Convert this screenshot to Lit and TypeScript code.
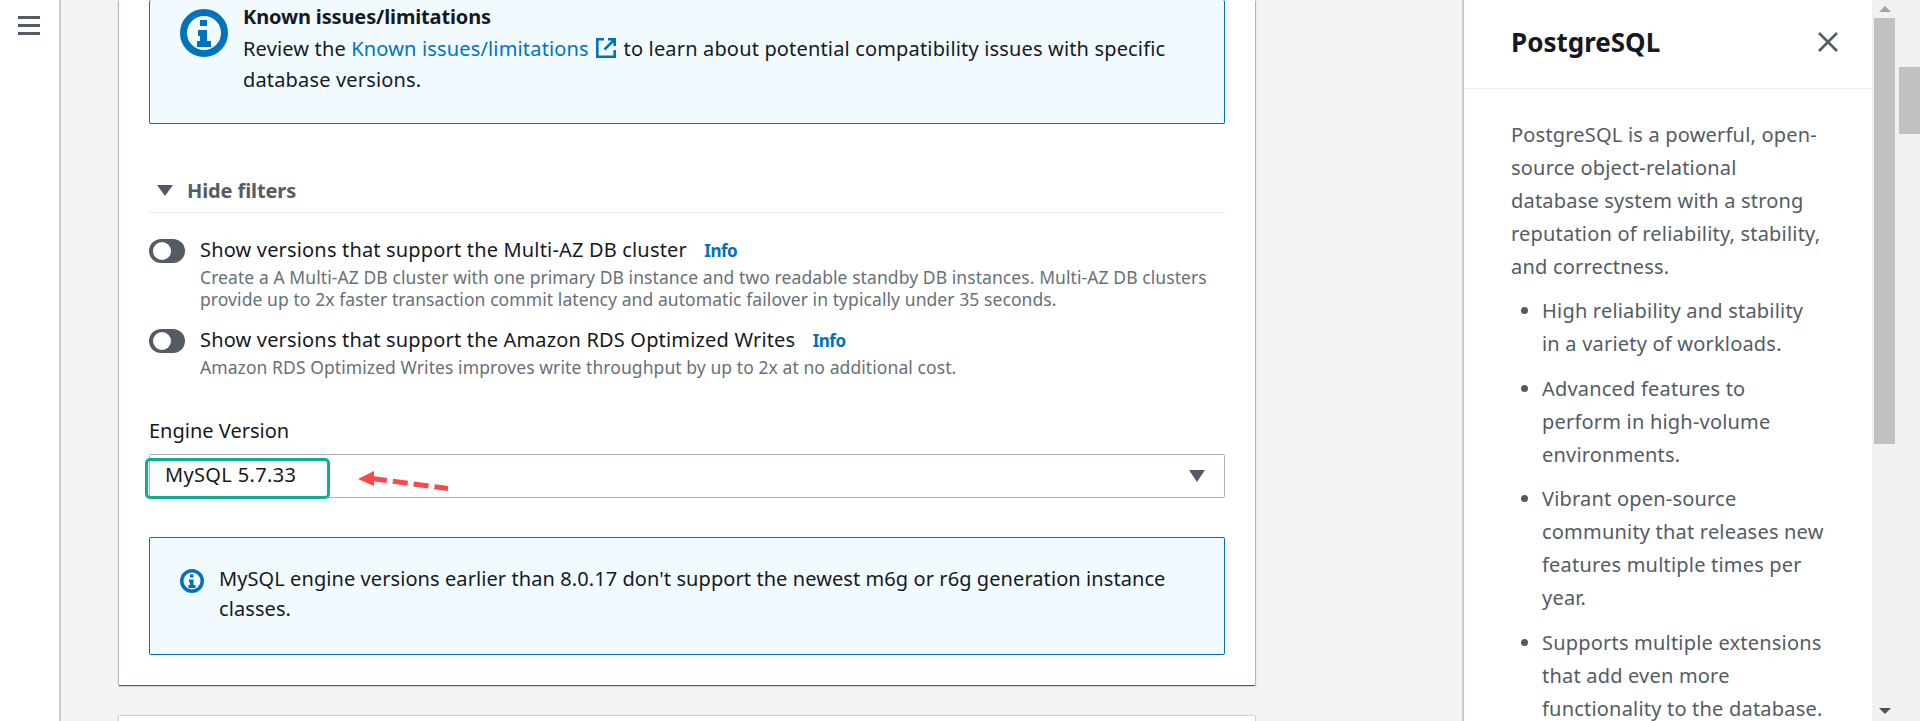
import { LitElement, html, css } from "lit";
import { customElement } from "lit/decorators.js";

const infoIcon = (size: number) => html`<svg class="info" width=${size} height=${size} viewBox="0 0 48 48">
  <circle cx="24" cy="24" r="20.5" fill="none" stroke="#0073bb" stroke-width="7"/>
  <rect x="20" y="11" width="7" height="6" fill="#0073bb"/>
  <path d="M18 21h9v11h4v6H17v-6h3v-5h-2z" fill="#0073bb"/>
</svg>`;

const extIcon = html`<svg class="ext" width="22" height="22" viewBox="0 0 22 22" fill="none" stroke="#0073bb" stroke-width="2.6">
  <path d="M9 2.3H2.3v17.4h17.4V13"/>
  <path d="M13 2.3h6.7V9M19.4 2.6 9.5 12.5"/>
</svg>`;

const tri = (w: number, h: number, color: string) => html`<svg width=${w} height=${h} viewBox="0 0 16 11" preserveAspectRatio="none" class="tri"><path d="M0 0h16L8 11z" fill=${color}/></svg>`;

@customElement("app-root")
export class AppRoot extends LitElement {
  static styles = css`
    :host {
      display: block;
      width: 1920px;
      height: 721px;
      overflow: hidden;
      font-family: "Noto Sans", "Liberation Sans", sans-serif;
      font-size: 20px;
      letter-spacing: 0.08px;
      color: #16191f;
      background: #f2f3f3;
    }
    * { box-sizing: border-box; }
    .page { display: grid; grid-template-columns: 61px 1fr 410px 48px; height: 721px; }
    .nav { background: #fff; border-right: 2px solid #c9cccc; padding: 16px 0 0 18px; }
    .burger { display: flex; flex-direction: column; gap: 5px; width: 22px; }
    .burger i { display: block; height: 3px; background: #545b64; }
    .main { padding-left: 58px; }
    .card {
      position: relative;
      width: 1136px;
      background: #fff;
      padding: 0 30px 30px 30px;
      box-shadow: 0 1px 1px 0 rgba(0,28,36,.5), 1px 1px 1px 0 rgba(0,28,36,.2), -1px 1px 1px 0 rgba(0,28,36,.2);
    }
    .next {
      width: 1136px;
      height: 5px;
      margin-top: 31px;
      background: #fff;
      box-shadow: 1px 0 1px 0 rgba(0,28,36,.15), -1px 0 1px 0 rgba(0,28,36,.15), 0 -1px 1px 0 rgba(0,28,36,.08);
    }
    .alert {
      display: flex;
      background: #f1faff;
      border: 1px solid #0073bb;
      border-radius: 2px;
      line-height: 31px;
    }
    .alert.top {
      height: 124px;
      border-top: none;
      padding: 2px 0 0 30px;
      gap: 15px;
      letter-spacing: 0.16px;
    }
    .alert.top .info { margin-top: 7px; flex: none; }
    .title { font-weight: 700; letter-spacing: -0.14px; margin-top: -1px; margin-bottom: 1px; }
    .link { color: #0073bb; }
    .ext { vertical-align: -3px; margin: 0 1px; }
    .nowrap { white-space: nowrap; }
    .filters {
      display: flex;
      align-items: center;
      gap: 14px;
      margin-top: 50px;
      height: 39px;
      padding: 0 0 5px 8px;
      border-bottom: 1px solid #eaeded;
      font-weight: 700;
      letter-spacing: -0.1px;
      color: #545b64;
    }
    .toggle-row { display: flex; gap: 15px; margin-top: 19px; }
    .toggle-row.first { margin-top: 26px; }
    .toggle {
      flex: none;
      width: 36px;
      height: 24px;
      border-radius: 12px;
      background: #545b64;
      padding: 3px 0 0 4px;
    }
    .toggle i { display: block; width: 18px; height: 18px; border-radius: 50%; background: #fff; }
    .toggle-text { margin-top: -1px; }
    .label { line-height: 24px; white-space: nowrap; letter-spacing: 0.17px; }
    .inf { color: #0073bb; font-weight: 700; font-size: 17px; line-height: 1; margin-left: 12px; letter-spacing: -0.5px; }
    .desc { margin-top: 4px; font-size: 17.5px; line-height: 22px; color: #687078; white-space: nowrap; }
    .ev { margin-top: 38px; line-height: 30px; letter-spacing: 0; }
    .select-wrap { position: relative; margin-top: 8px; }
    .select {
      display: flex;
      justify-content: space-between;
      height: 44px;
      border: 1px solid #aab7b8;
      border-radius: 2px;
      padding: 5px 19px 0 15px;
      line-height: 30px;
      letter-spacing: 0.35px;
    }
    .select .tri { margin-top: 10px; }
    .highlight {
      position: absolute;
      left: -4px;
      top: 4px;
      width: 185px;
      height: 41px;
      border: 3px solid #0fae8f;
      border-radius: 5px;
    }
    .arrow { position: absolute; left: 209px; top: 14px; }
    .alert.bottom {
      margin-top: 39px;
      height: 118px;
      padding: 26px 0 0 30px;
      gap: 15px;
      line-height: 30px;
    }
    .alert.bottom .info { margin-top: 5px; flex: none; }
    .help { background: #fff; border-left: 2px solid #c9cccc; }
    .help-head {
      display: flex;
      justify-content: space-between;
      align-items: center;
      height: 89px;
      padding: 0 34px 5px 47px;
      border-bottom: 1px solid #eaeded;
    }
    .help-head h2 { margin: 0; font-size: 26px; font-weight: 700; line-height: 30px; letter-spacing: 0; }
    .help-body { padding: 29px 0 0 47px; color: #545b64; line-height: 33px; white-space: nowrap; letter-spacing: 0.2px; }
    .help-body p { margin: 0; }
    .help-body ul { margin: 11px 0 0; padding: 0 0 0 31px; }
    .help-body li { margin-bottom: 11.5px; }
    .bars { display: flex; background: #f1f1f1; }
    .bar { display: flex; flex-direction: column; align-items: center; width: 21px; margin-left: 2px; height: 721px; }
    .bar .thumb { width: 21px; height: 426px; margin-top: 6px; background: #c1c1c1; }
    .bar .up { margin-top: 6px; }
    .bar .down { margin-top: auto; margin-bottom: 7px; }
    .outer { width: 21px; margin-left: 4px; }
    .outer .thumb { height: 67px; margin-top: 67px; background: #c1c1c1; }
  `;

  render() {
    return html`<div class="page">
      <div class="nav"><div class="burger"><i></i><i></i><i></i></div></div>
      <div class="main">
        <div class="card">
          <div class="alert top">
            ${infoIcon(48)}
            <div class="nowrap">
              <div class="title">Known issues/limitations</div>
              <div>Review the <span class="link">Known issues/limitations</span> ${extIcon} to learn about potential compatibility issues with specific</div>
              <div>database versions.</div>
            </div>
          </div>
          <div class="filters">${tri(16, 11, "#545b64")}<span>Hide filters</span></div>
          <div class="toggle-row first">
            <div class="toggle"><i></i></div>
            <div class="toggle-text">
              <div class="label">Show versions that support the Multi-AZ DB cluster <span class="inf">Info</span></div>
              <div class="desc">Create a A Multi-AZ DB cluster with one primary DB instance and two readable standby DB instances. Multi-AZ DB clusters<br>provide up to 2x faster transaction commit latency and automatic failover in typically under 35 seconds.</div>
            </div>
          </div>
          <div class="toggle-row">
            <div class="toggle"><i></i></div>
            <div class="toggle-text">
              <div class="label">Show versions that support the Amazon RDS Optimized Writes <span class="inf">Info</span></div>
              <div class="desc">Amazon RDS Optimized Writes improves write throughput by up to 2x at no additional cost.</div>
            </div>
          </div>
          <div class="ev">Engine Version</div>
          <div class="select-wrap">
            <div class="select"><span>MySQL 5.7.33</span>${tri(16, 12, "#545b64")}</div>
            <div class="highlight"></div>
            <svg class="arrow" width="92" height="24" viewBox="0 0 92 24">
              <path d="M0 11 16 3V18z" fill="#f84a4a"/>
              <path d="M14 10.500 90 20.500" stroke="#f84a4a" stroke-width="5" stroke-dasharray="15 6" fill="none"/>
            </svg>
          </div>
          <div class="alert bottom">
            ${infoIcon(24)}
            <div class="nowrap">MySQL engine versions earlier than 8.0.17 don't support the newest m6g or r6g generation instance<br>classes.</div>
          </div>
        </div>
        <div class="next"></div>
      </div>
      <div class="help">
        <div class="help-head">
          <h2>PostgreSQL</h2>
          <svg width="20" height="20" viewBox="0 0 20 20" stroke="#545b64" stroke-width="2.600" fill="none"><path d="M1 1l18 18M19 1 1 19"/></svg>
        </div>
        <div class="help-body">
          <p>PostgreSQL is a powerful, open-<br>source object-relational<br>database system with a strong<br>reputation of reliability, stability,<br>and correctness.</p>
          <ul>
            <li>High reliability and stability<br>in a variety of workloads.</li>
            <li>Advanced features to<br>perform in high-volume<br>environments.</li>
            <li>Vibrant open-source<br>community that releases new<br>features multiple times per<br>year.</li>
            <li>Supports multiple extensions<br>that add even more<br>functionality to the database.</li>
          </ul>
        </div>
      </div>
      <div class="bars">
        <div class="bar">
          <svg class="up" width="12" height="6" viewBox="0 0 12 6"><path d="M6 0l6 6H0z" fill="#a3a3a3"/></svg>
          <div class="thumb"></div>
          <svg class="down" width="12" height="6" viewBox="0 0 12 6"><path d="M0 0h12L6 6z" fill="#505050"/></svg>
        </div>
        <div class="bar outer"><div class="thumb"></div></div>
      </div>
    </div>`;
  }
}
